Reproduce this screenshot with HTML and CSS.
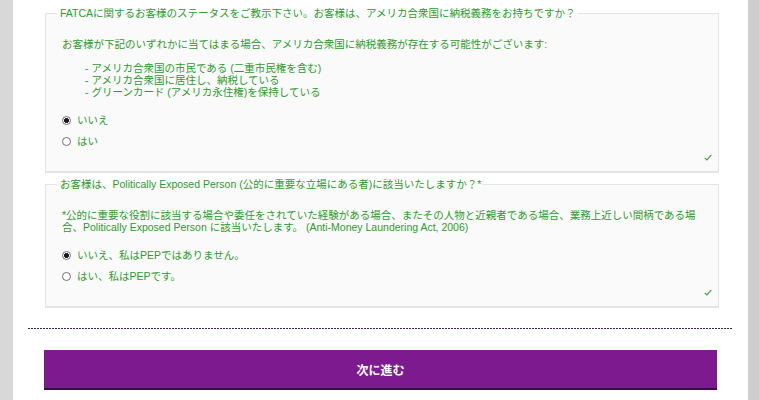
FILE: index.html
```html
<!DOCTYPE html>
<html lang="ja">
<head>
<meta charset="utf-8">
<title>FATCA / PEP</title>
<link rel="stylesheet" href="styles.css">
</head>
<body>
<div class="page">
  <div class="side side-left"></div>
  <main class="main">
    <fieldset class="box box-first">
      <legend class="legend">FATCAに関するお客様のステータスをご教示下さい。お客様は、アメリカ合衆国に納税義務をお持ちですか？</legend>
      <p class="intro">お客様が下記のいずれかに当てはまる場合、アメリカ合衆国に納税義務が存在する可能性がございます:</p>
      <ul class="list">
        <li>- アメリカ合衆国の市民である (二重市民権を含む)</li>
        <li>- アメリカ合衆国に居住し、納税している</li>
        <li>- グリーンカード (アメリカ永住権)を保持している</li>
      </ul>
      <div class="radios">
        <label class="radio-row"><span class="radio checked"></span><span>いいえ</span></label>
        <label class="radio-row"><span class="radio"></span><span>はい</span></label>
      </div>
      <div class="check-row"><svg class="check" width="8" height="7" viewBox="0 0 8 7"><path d="M0.8 3.8 L2.9 5.9 L7.3 0.9" fill="none" stroke="#3a9e3a" stroke-width="1.1"/></svg></div>
    </fieldset>

    <fieldset class="box box-second">
      <legend class="legend">お客様は、Politically Exposed Person (公的に重要な立場にある者)に該当いたしますか？*</legend>
      <p class="intro">*公的に重要な役割に該当する場合や委任をされていた経験がある場合、またその人物と近親者である場合、業務上近しい間柄である場<br>合、Politically Exposed Person に該当いたします。 (Anti-Money Laundering Act, 2006)</p>
      <div class="radios">
        <label class="radio-row"><span class="radio checked"></span><span>いいえ、私はPEPではありません。</span></label>
        <label class="radio-row"><span class="radio"></span><span>はい、私はPEPです。</span></label>
      </div>
      <div class="check-row"><svg class="check" width="8" height="7" viewBox="0 0 8 7"><path d="M0.8 3.8 L2.9 5.9 L7.3 0.9" fill="none" stroke="#3a9e3a" stroke-width="1.1"/></svg></div>
    </fieldset>

    <div class="divider"></div>

    <button class="next" type="button">次に進む</button>
  </main>
  <div class="side side-right"></div>
</div>
</body>
</html>
```

FILE: styles.css
```css
html, body {
  margin: 0;
  padding: 0;
}
body {
  font-family: "Liberation Sans", "Noto Sans CJK JP", sans-serif;
  font-size: 10.5px;
  color: #2e9b2e;
  background: #ffffff;
}
.page {
  display: flex;
  height: 400px;
  overflow: hidden;
}
.side-left {
  width: 13px;
  background: #d8d8d8;
}
.side-right {
  width: 11px;
  background: #cdcdcd;
}
.main {
  flex: 1;
  background: #ffffff;
  padding-top: 7px;
  display: flex;
  flex-direction: column;
}
.box {
  margin: 0 29px 0 32px;
  padding: 0 6px 9px 16px;
  border: 1px solid #e4e4e4;
  border-bottom-width: 2px;
  background: #fafafa;
  min-inline-size: 0;
}
.box-second {
  margin-top: 5px;
}
.legend {
  margin-left: -5px;
  padding: 0 2px 0 3px;
  line-height: 12px;
  color: #2e9b2e;
}
.intro {
  margin: 19px 0 0 0;
  line-height: 12px;
}
.list {
  list-style: none;
  margin: 12px 0 0 0;
  padding: 0 0 0 23px;
  line-height: 12px;
}
.radios {
  margin-top: 15px;
  display: flex;
  flex-direction: column;
  gap: 7px;
}
.radio-row {
  display: flex;
  align-items: center;
  gap: 6px;
  height: 14px;
  line-height: 14px;
}
.radio {
  width: 9px;
  height: 9px;
  box-sizing: border-box;
  border: 1px solid #6f6f6f;
  border-radius: 50%;
  background: #ffffff;
}
.radio.checked {
  background: radial-gradient(circle, #1a1a1a 0 2.2px, #ffffff 2.6px);
}
.check-row {
  margin-top: 4px;
  height: 10px;
  display: flex;
  justify-content: flex-end;
  align-items: center;
  padding-right: 0;
}
.check {
  display: block;
}
.divider {
  margin: 20px 15px 0 15px;
  height: 1px;
  background: repeating-linear-gradient(to right, #3d2450 0 2px, transparent 2px 3px);
}
.next {
  margin: 21px 31px 0 31px;
  height: 40px;
  border: none;
  border-bottom: 2px solid #3e0a47;
  background: #7e1a8f;
  color: #ffffff;
  font-family: "Liberation Sans", "Noto Sans CJK JP", sans-serif;
  font-size: 12px;
  font-weight: bold;
  padding: 0;
  cursor: pointer;
}
```
